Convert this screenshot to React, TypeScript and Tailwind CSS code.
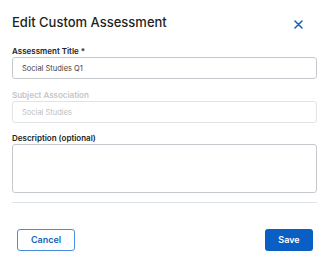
import React, { useState } from "react";

const font = { fontFamily: "Inter, 'Noto Sans', sans-serif" };

const EditAssessment = () => {
  const [title, setTitle] = useState("Social Studies Q1");
  const [description, setDescription] = useState("");

  return (
    <div className="w-[329px] h-[268px] bg-white" style={font}>
      <div className="px-3 pt-[13px]">
        {/* Header */}
        <div className="flex items-center justify-between h-[18px]">
          <h2 className="text-[13px] leading-[18px] font-medium text-[#1d1f21]">
            Edit Custom Assessment
          </h2>
          <button className="mr-[14px] mt-[5px] text-[#1565c0]">
            <svg width="9" height="9" viewBox="0 0 9 9" fill="none">
              <path d="M1 1L8 8M8 1L1 8" stroke="currentColor" strokeWidth="1.6" strokeLinecap="round" />
            </svg>
          </button>
        </div>

        {/* Assessment Title */}
        <div className="mt-[15px]">
          <label className="block text-[8px] leading-[10px] font-semibold text-[#222]">
            Assessment Title *
          </label>
          <input
            type="text"
            value={title}
            onChange={(e) => setTitle(e.target.value)}
            className="block mt-[1px] w-full h-[22px] border border-[#c5c9cd] rounded-[3px] px-[9px] text-[7.5px] text-[#444] outline-none"
          />
        </div>

        {/* Subject Association */}
        <div className="mt-[11px]">
          <label className="block text-[8px] leading-[10px] font-semibold text-[#c3c6c9]">
            Subject Association
          </label>
          <input
            type="text"
            value="Social Studies"
            disabled
            readOnly
            className="block mt-[1px] w-full h-[22px] border border-[#e1e4e7] rounded-[3px] px-[9px] text-[7.5px] text-[#bcc0c4] bg-white outline-none"
          />
        </div>

        {/* Description */}
        <div className="mt-[10px]">
          <label className="block text-[8px] leading-[10px] font-semibold text-[#222]">
            Description (optional)
          </label>
          <textarea
            value={description}
            onChange={(e) => setDescription(e.target.value)}
            className="block mt-[1px] w-full h-[49px] border border-[#c5c9cd] rounded-[3px] px-[9px] py-[5px] text-[8px] resize-none outline-none"
          />
        </div>

        <div className="mt-[9px] border-t border-[#dfe3e6]" />

        {/* Footer */}
        <div className="mt-[26px] flex items-center justify-between pl-[5px] pr-[4px]">
          <button className="w-[58px] h-[22px] border border-[#4a8fdc] rounded-[3px] text-[9px] font-semibold text-[#1565c0]">
            Cancel
          </button>
          <button className="w-[48px] h-[22px] rounded-[3px] bg-[#0a5fc4] text-[9px] font-semibold text-white">
            Save
          </button>
        </div>
      </div>
    </div>
  );
};

export default function App() {
  return <EditAssessment />;
}
